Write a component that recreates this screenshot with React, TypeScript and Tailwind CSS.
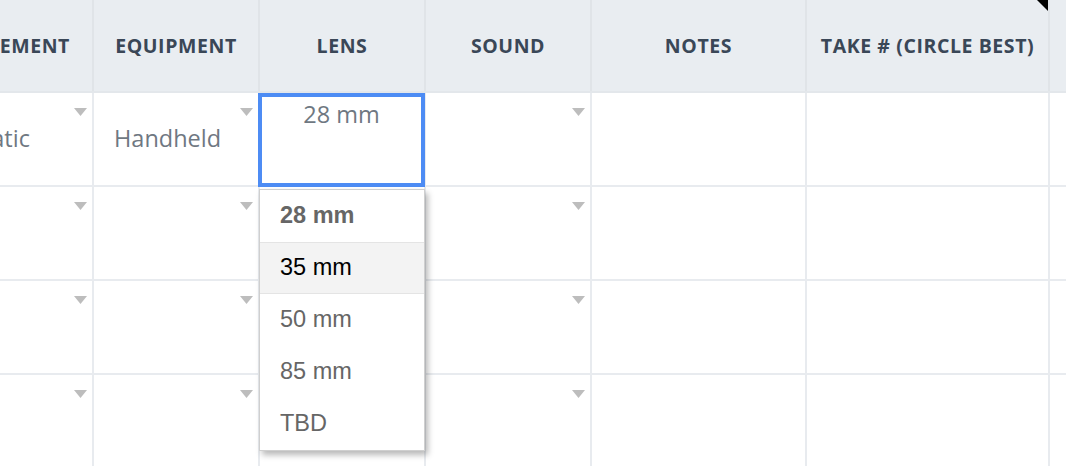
import { useState } from 'react';

type Col = {
  key: string;
  title: string;
  width: string;
  select?: boolean;
};

const columns: Col[] = [
  { key: 'movement', title: 'MOVEMENT', width: 'w-[140px]', select: true },
  { key: 'equipment', title: 'EQUIPMENT', width: 'w-[166px]', select: true },
  { key: 'lens', title: 'LENS', width: 'w-[166px]', select: true },
  { key: 'sound', title: 'SOUND', width: 'w-[166px]', select: true },
  { key: 'notes', title: 'NOTES', width: 'w-[215px]' },
  { key: 'take', title: 'TAKE # (CIRCLE BEST)', width: 'w-[243px]' },
  { key: 'extra', title: '', width: 'w-[120px]' },
];

const rows: Record<string, string>[] = [
  { movement: 'Static', equipment: 'Handheld', lens: '28 mm' },
  {},
  {},
  {},
];

const lensOptions = ['28 mm', '35 mm', '50 mm', '85 mm', 'TBD'];

const Caret = () => (
  <svg className="absolute right-[5px] top-[15px]" width="13" height="8" viewBox="0 0 13 8">
    <path d="M0 0 L13 0 L6.5 8 Z" fill="#bdbdbd" />
  </svg>
);

const LensDropdown = ({ value, hovered }: { value: string; hovered: string }) => (
  <div className="absolute left-[-1px] top-[96px] z-20 w-[166px] border border-[#cfcfcf] bg-white shadow-[3px_4px_6px_rgba(0,0,0,0.28)] font-['Liberation_Sans',Arial,sans-serif] text-[23.5px]">
    {lensOptions.map((opt) => {
      const isSelected = opt === value;
      const isHover = opt === hovered;
      return (
        <div
          key={opt}
          className={
            isHover
              ? 'flex h-[52px] items-center border-y border-[#e4e4e4] bg-[#f3f3f3] pl-[20px] text-black'
              : isSelected
                ? 'flex h-[52px] items-center pl-[20px] font-bold text-[#666666]'
                : 'flex h-[52px] items-center pl-[20px] text-[#666666]'
          }
        >
          {opt}
        </div>
      );
    })}
  </div>
);

export default function App() {
  const [editing] = useState({ row: 0, col: 'lens' });

  return (
    <div className="h-[466px] w-[1066px] overflow-hidden bg-white font-['Open_Sans',sans-serif]">
      <div className="ml-[-46px] w-max">
        {/* header */}
        <div className="flex h-[93px] border-b-2 border-[#e3e7eb] bg-[#e9edf1]">
          {columns.map((c, i) => (
            <div
              key={c.key}
              className={`${c.width} relative flex h-full shrink-0 items-center border-r-2 border-[#e0e4e8] text-[19.5px] font-bold tracking-[0.03em] text-[#3a4757] ${
                i === 0 ? 'justify-end pr-[22px]' : 'justify-center'
              }`}
            >
              {c.title}
              {c.key === 'take' && (
                <svg className="absolute right-0 top-0" width="11" height="11" viewBox="0 0 11 11">
                  <path d="M0 0 L11 0 L11 11 Z" fill="#000" />
                </svg>
              )}
            </div>
          ))}
        </div>

        {/* body */}
        {rows.map((r, ri) => (
          <div key={ri} className="flex h-[94px] border-b-2 border-[#e8ebef]">
            {columns.map((c, ci) => {
              const isEditing = editing.row === ri && editing.col === c.key;
              return (
                <div
                  key={c.key}
                  className={`${c.width} relative h-full shrink-0 border-r-2 border-[#e8ebef] text-[23.5px] text-[#6f7882]`}
                >
                  {isEditing ? (
                    <>
                      <div className="absolute left-[-2px] top-0 z-10 flex h-[94px] w-[167px] justify-center border-[4px] border-[#4d8cf4] bg-white leading-[34px]">
                        {r[c.key]}
                      </div>
                      <LensDropdown value={r[c.key]} hovered="35 mm" />
                    </>
                  ) : (
                    <>
                      {r[c.key] && (
                        <div className={`flex h-full items-center ${ci === 0 ? 'pl-[16px]' : 'pl-[20px]'}`}>
                          {r[c.key]}
                        </div>
                      )}
                      {c.select && <Caret />}
                    </>
                  )}
                </div>
              );
            })}
          </div>
        ))}
      </div>
    </div>
  );
}
